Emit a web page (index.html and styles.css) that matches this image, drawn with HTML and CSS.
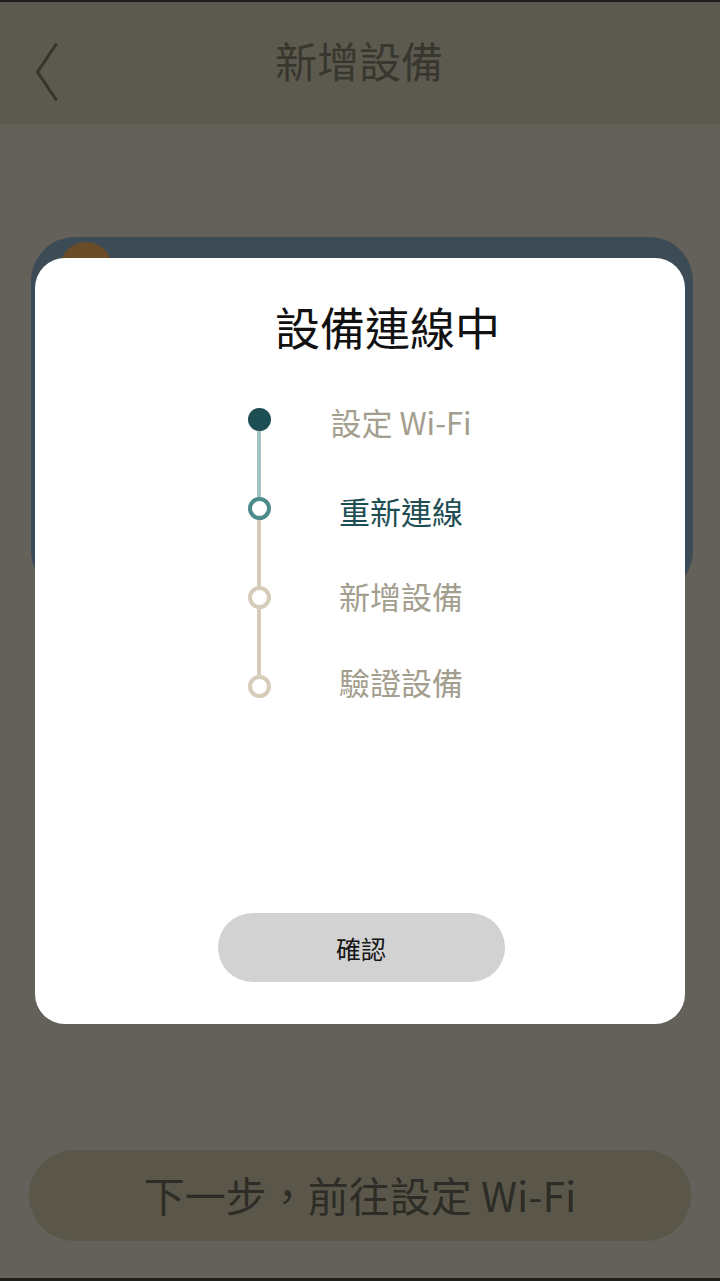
FILE: index.html
```html
<!DOCTYPE html>
<html lang="zh-Hant">
<head>
<meta charset="utf-8">
<title>新增設備</title>
<link rel="stylesheet" href="styles.css">
</head>
<body>
<div class="app">
  <header class="topbar">
    <svg class="back" viewBox="0 0 24 58" width="24" height="58">
      <path d="M21 1.5 L2.5 29 L21 56.5" fill="none" stroke="#36352d" stroke-width="3" stroke-linecap="round" stroke-linejoin="round"/>
    </svg>
    <h1 class="topbar-title">新增設備</h1>
  </header>
  <main class="content">
    <section class="card">
      <div class="badge">1</div>
    </section>
  </main>
  <footer class="footer">
    <button class="next-btn">下一步，前往設定 Wi-Fi</button>
  </footer>

  <div class="modal">
    <h2 class="modal-title">設備連線中</h2>
    <div class="steps">
      <div class="rail">
        <span class="dot dot-done"></span>
        <span class="line line-done"></span>
        <span class="dot dot-current"></span>
        <span class="line"></span>
        <span class="dot"></span>
        <span class="line"></span>
        <span class="dot"></span>
      </div>
      <ul class="labels">
        <li class="label">設定 Wi-Fi</li>
        <li class="label label-current">重新連線</li>
        <li class="label label-short">新增設備</li>
        <li class="label label-tall">驗證設備</li>
      </ul>
    </div>
    <button class="confirm">確認</button>
  </div>
</div>
</body>
</html>
```

FILE: styles.css
```css
* { box-sizing: border-box; }
html, body { margin: 0; padding: 0; }
body {
  background: #111;
  font-family: "Noto Sans CJK TC", "Noto Sans", sans-serif;
}
.app {
  position: relative;
  width: 720px;
  height: 1281px;
  background: #64615a;
  border-top: 2px solid #1e1e1c;
  border-bottom: 3px solid #1e1e1c;
  display: flex;
  flex-direction: column;
  overflow: hidden;
}
.topbar {
  height: 122px;
  background: #5c5a4e;
  display: flex;
  align-items: center;
  justify-content: center;
  position: relative;
  flex-shrink: 0;
  padding-bottom: 6px;
}
.back {
  position: absolute;
  left: 35px;
  top: 41px;
}
.topbar-title {
  margin: 0;
  font-size: 42px;
  font-weight: 400;
  color: #38372f;
  line-height: 1;
  transform: translateX(-1px);
}
.content {
  flex: 1;
  padding: 113px 27px 0 31px;
}
.card {
  height: 358px;
  background: #3c4b55;
  border-radius: 44px;
  padding: 5px 0 0 29px;
}
.badge {
  width: 52px;
  height: 52px;
  border-radius: 50%;
  background: #6a4c27;
  color: #77766e;
  font-size: 30px;
  line-height: 52px;
  text-align: center;
}
.footer {
  padding: 0 29px 37px 29px;
  flex-shrink: 0;
}
.next-btn {
  width: 662px;
  height: 91px;
  border: none;
  border-radius: 46px;
  background: #5a574a;
  color: #2d2c26;
  font-family: "Noto Sans CJK TC", "Noto Sans", sans-serif;
  font-size: 41px;
  display: block;
  padding: 0 0 4px 0;
}
.modal {
  position: absolute;
  left: 35px;
  top: 256px;
  width: 650px;
  height: 766px;
  background: #fff;
  border-radius: 30px;
  display: flex;
  flex-direction: column;
  padding: 39px 0 42px 0;
}
.modal-title {
  margin: 0;
  font-size: 45px;
  font-weight: 400;
  line-height: 60px;
  color: #111;
  text-align: center;
  padding-left: 55px;
}
.steps {
  display: flex;
  margin-top: 18px;
  padding-left: 212px;
}
.rail {
  display: flex;
  flex-direction: column;
  align-items: center;
  width: 24px;
  padding-top: 33px;
}
.dot {
  width: 23px;
  height: 23px;
  border-radius: 50%;
  border: 4px solid #d5cdb9;
  background: #fff;
  flex-shrink: 0;
}
.dot-done {
  background: #1e4f55;
  border-color: #1e4f55;
}
.dot-current {
  border-color: #4d8a8b;
}
.line {
  width: 4px;
  height: 66px;
  background: #d5cdb9;
}
.line-done {
  background: #a3c4c3;
}
.labels {
  list-style: none;
  margin: 0 0 0 30px;
  padding: 0;
  width: 200px;
  display: flex;
  flex-direction: column;
}
.label {
  height: 89px;
  display: flex;
  align-items: center;
  justify-content: center;
  font-size: 31px;
  color: #a39e8e;
  padding-top: 4px;
}
.label-current {
  color: #1f4f55;
}
.label-short {
  height: 81px;
}
.label-tall {
  height: 91px;
}
.confirm {
  margin: auto auto 0 auto;
  transform: translateX(1px);
  width: 287px;
  height: 69px;
  border: none;
  border-radius: 35px;
  background: #d2d2d2;
  color: #151515;
  font-family: "Noto Sans CJK TC", "Noto Sans", sans-serif;
  font-size: 25px;
  padding: 0;
}
```
